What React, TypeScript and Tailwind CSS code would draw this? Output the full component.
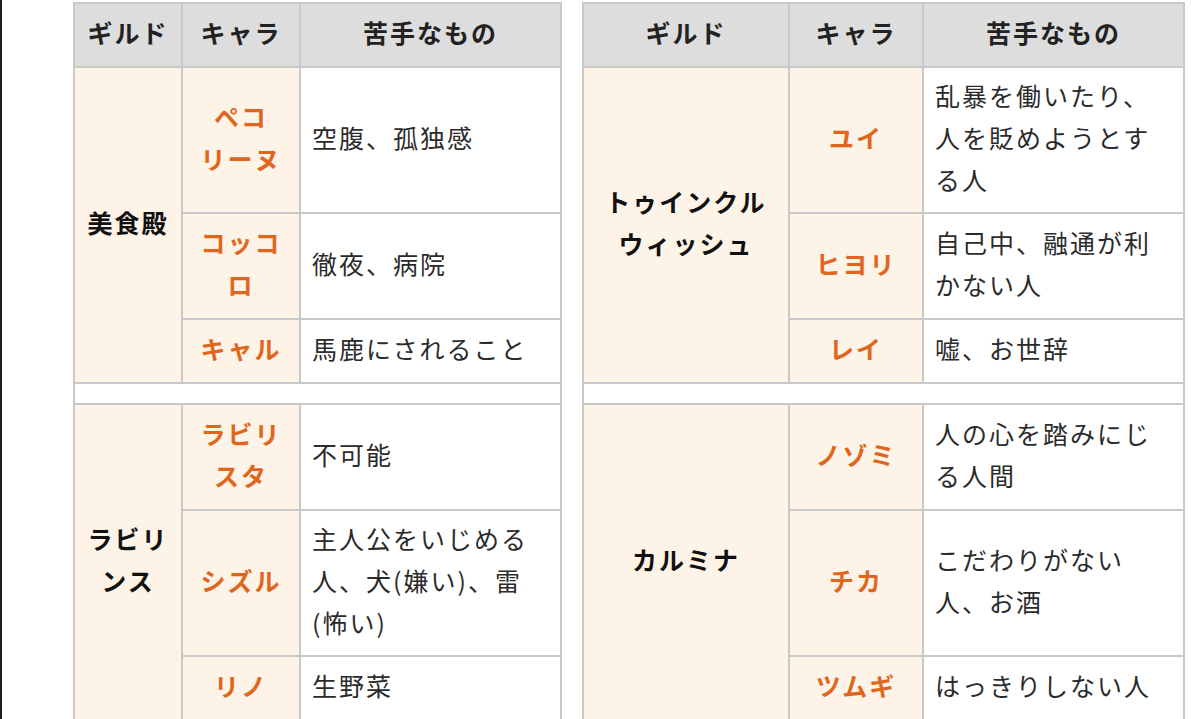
type Row = { name: string[]; text: string[] };
type Group = { guild: string[]; rows: Row[] };

const leftGroups: Group[] = [
  {
    guild: ["美食殿"],
    rows: [
      { name: ["ペコ", "リーヌ"], text: ["空腹、孤独感"] },
      { name: ["コッコ", "ロ"], text: ["徹夜、病院"] },
      { name: ["キャル"], text: ["馬鹿にされること"] },
    ],
  },
  {
    guild: ["ラビリ", "ンス"],
    rows: [
      { name: ["ラビリ", "スタ"], text: ["不可能"] },
      { name: ["シズル"], text: ["主人公をいじめる", "人、犬(嫌い)、雷", "(怖い)"] },
      { name: ["リノ"], text: ["生野菜"] },
    ],
  },
];

const rightGroups: Group[] = [
  {
    guild: ["トゥインクル", "ウィッシュ"],
    rows: [
      { name: ["ユイ"], text: ["乱暴を働いたり、", "人を貶めようとす", "る人"] },
      { name: ["ヒヨリ"], text: ["自己中、融通が利", "かない人"] },
      { name: ["レイ"], text: ["嘘、お世辞"] },
    ],
  },
  {
    guild: ["カルミナ"],
    rows: [
      { name: ["ノゾミ"], text: ["人の心を踏みにじ", "る人間"] },
      { name: ["チカ"], text: ["こだわりがない", "人、お酒"] },
      { name: ["ツムギ"], text: ["はっきりしない人"] },
    ],
  },
];

function Lines({ lines }: { lines: string[] }) {
  return (
    <span className="whitespace-nowrap">
      {lines.map((l, i) => (
        <span key={i} className="block">
          {l}
        </span>
      ))}
    </span>
  );
}

function GuildTable({ groups, cols }: { groups: Group[]; cols: string }) {
  return (
    <div
      className={`grid ${cols} grid-rows-[62px_144px_104px_62px_19px_104px_144px_62px] gap-[2px] p-[2px] bg-[#c9c9c9] shrink-0`}
    >
      <div className="bg-[#dddddd] flex items-center justify-center pb-[6px] font-bold text-[#222]">ギルド</div>
      <div className="bg-[#dddddd] flex items-center justify-center pb-[6px] font-bold text-[#222]">キャラ</div>
      <div className="bg-[#dddddd] flex items-center justify-center pb-[6px] font-bold text-[#222]">苦手なもの</div>

      {groups.map((g, gi) => (
        <div key={gi} className="contents">
          {gi > 0 && <div className="col-span-3 bg-white" />}
          <div className="row-span-3 bg-[#fdf3e6] flex items-center justify-center pb-[6px] text-center font-bold text-[#111]">
            <Lines lines={g.guild} />
          </div>
          {g.rows.map((r, ri) => (
            <div key={ri} className="contents">
              <div className="bg-[#fdf3e6] flex items-center justify-center pb-[6px] text-center font-bold text-[#e0661e]">
                <Lines lines={r.name} />
              </div>
              <div className="bg-white flex items-center pl-[11px] pb-[6px] text-[#2b2b2b]">
                <Lines lines={r.text} />
              </div>
            </div>
          ))}
        </div>
      ))}
    </div>
  );
}

export default function App() {
  return (
    <div
      lang="ja"
      className="h-screen w-full overflow-hidden bg-white border-l-2 border-[#1e1e1e] flex items-start gap-[20px] pt-[2px] pl-[71px] font-['Noto_Sans_CJK_JP','Noto_Sans',sans-serif] text-[25px] leading-[42px] tracking-[2px]"
    >
      <GuildTable groups={leftGroups} cols="grid-cols-[106px_116px_259px]" />
      <GuildTable groups={rightGroups} cols="grid-cols-[204px_132px_259px]" />
    </div>
  );
}
